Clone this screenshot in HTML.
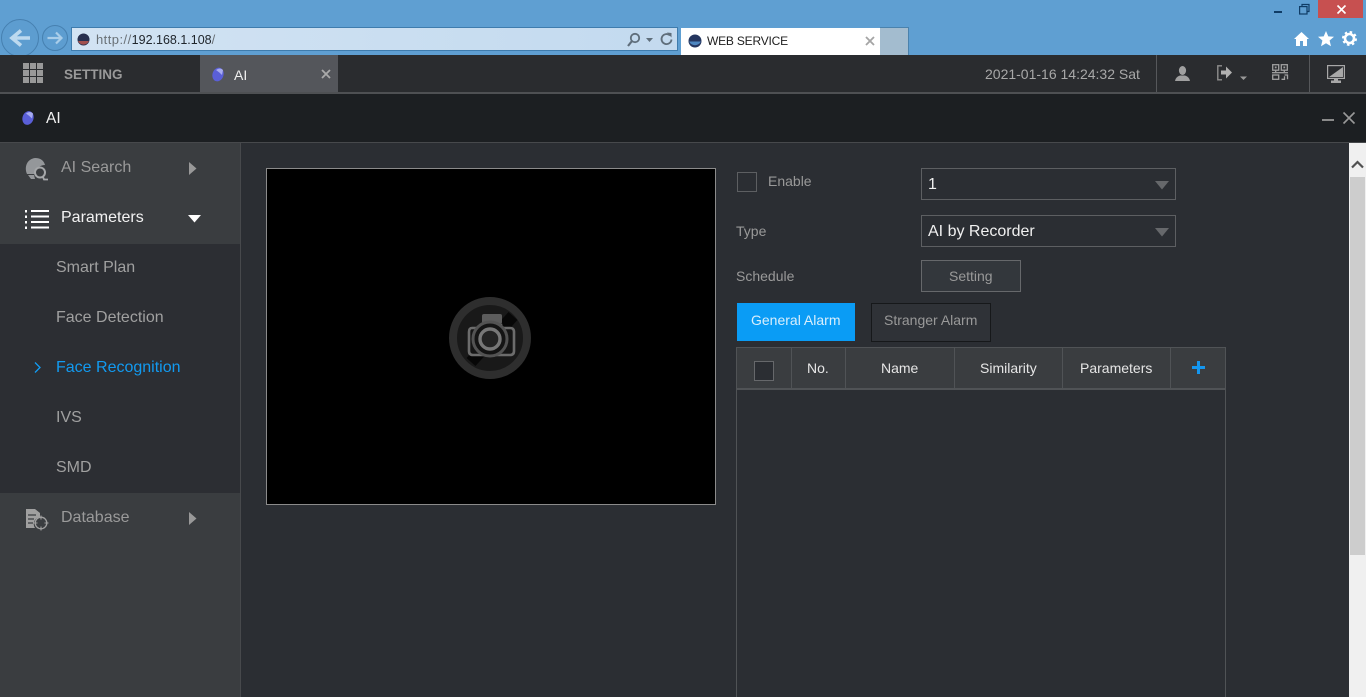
<!DOCTYPE html>
<html lang="en">
<head>
<meta charset="utf-8">
<title>WEB SERVICE</title>
<style>
html,body{margin:0;padding:0;width:1366px;height:697px;overflow:hidden;background:#2b2e33;font-family:"Liberation Sans",sans-serif}
.a{position:absolute}
.t{position:absolute;white-space:nowrap;line-height:20px}
svg{position:absolute;overflow:visible}
</style>
</head>
<body>
<!-- browser chrome -->
<div class="a" style="left:0;top:0;width:1366px;height:55px;background:#5f9fd2"></div>
<svg style="left:0;top:18px" width="70" height="37" viewBox="0 0 70 37">
<circle cx="20" cy="20" r="18.500" fill="#5d9dd0" stroke="#4680b0" stroke-width="1"/>
<circle cx="55" cy="20" r="12.500" fill="#5d9dd0" stroke="#4680b0" stroke-width="1"/>
<path d="M30 20H14M21 12.500l-9 7.500 9 7.500" fill="none" stroke="#bcd9ef" stroke-width="3.600"/>
<path d="M47.500 20H61M56 14.500l5.500 5.500-5.500 5.500" fill="none" stroke="#a9cde9" stroke-width="2.200"/>
</svg>
<div class="a" style="left:71px;top:27px;width:607px;height:24px;box-sizing:border-box;border:1px solid #3f7cad;background:linear-gradient(90deg,#d2e3f3,#c3daef)"></div>
<svg style="left:77px;top:33px" width="13" height="13"><circle cx="6.500" cy="6.500" r="6" fill="#28304f"/><path d="M1 8a6 6 0 0 0 11 0z" fill="#a2504f"/></svg>
<div class="t" style="left:96px;top:30px;font-size:13px;color:#6a7177;letter-spacing:.45px">http://<span style="color:#20262c;font-size:12.500px;letter-spacing:0">192.168.1.108</span>/</div>
<svg style="left:626px;top:32px" width="50" height="16">
<circle cx="9" cy="6" r="4.200" fill="none" stroke="#5f6e7b" stroke-width="1.800"/>
<path d="M6 9l-4 5" stroke="#5f6e7b" stroke-width="2.200"/>
<path d="M20 6h7l-3.500 4z" fill="#5f6e7b"/>
<path d="M44 3.500a5 5 0 1 0 1.500 4" fill="none" stroke="#5f6e7b" stroke-width="1.800"/><path d="M41 .5l4.500.5v4.500z" fill="#5f6e7b"/>
</svg>
<div class="a" style="left:681px;top:28px;width:199px;height:27px;background:#fff"></div>
<div class="a" style="left:880px;top:27px;width:29px;height:28px;box-sizing:border-box;border:1px solid #4a82ad;border-left:0;border-bottom:0;background:#a3bccf"></div>
<svg style="left:688px;top:34px" width="14" height="14"><circle cx="7" cy="7" r="6.500" fill="#25365f"/><path d="M1.200 7.500a6 5 0 0 0 11.600 0z" fill="#4d86c0"/></svg>
<div class="t" style="left:707px;top:31px;font-size:12px;letter-spacing:-.2px;color:#1d1d1d">WEB SERVICE</div>
<svg style="left:865px;top:36px" width="10" height="10"><path d="M1 1l8 8M9 1l-8 8" stroke="#a5a5a5" stroke-width="1.800"/></svg>
<!-- window buttons -->
<div class="a" style="left:1274px;top:11px;width:8px;height:2px;background:#0f3c66"></div>
<svg style="left:1299px;top:4px" width="11" height="11"><path d="M3 2.500V.5h7v7H8" fill="none" stroke="#0f3c66" stroke-width="1.200"/><rect x=".6" y="2.600" width="7.400" height="7.400" fill="none" stroke="#0f3c66" stroke-width="1.200"/></svg>
<div class="a" style="left:1318px;top:0;width:45px;height:18px;background:#c75050"></div>
<svg style="left:1337px;top:5px" width="9" height="9"><path d="M.5.500l8 8M8.500.500l-8 8" stroke="#fff" stroke-width="1.600"/></svg>
<svg style="left:1294px;top:31px" width="64" height="16">
<path d="M7.500 1L0 8h2v7h4v-5h3v5h4V8h2z" fill="#fff"/>
<path d="M32 0l2.300 5.400 5.700.4-4.400 3.700 1.400 5.700-5-3-5 3 1.400-5.700L24 5.800l5.700-.4z" fill="#fff"/>
<circle cx="55.500" cy="7.500" r="4.500" fill="none" stroke="#fff" stroke-width="2.600"/>
<circle cx="55.500" cy="7.500" r="6.500" fill="none" stroke="#fff" stroke-width="2" stroke-dasharray="2.500 2.600"/>
</svg>
<!-- app top bar -->
<div class="a" style="left:0;top:55px;width:1366px;height:37px;background:#2a2c2f;border-bottom:2px solid #4e5053"></div>
<svg style="left:23px;top:63px" width="20" height="20" fill="#999">
<rect x="0" y="0" width="6" height="6"/><rect x="7" y="0" width="6" height="6"/><rect x="14" y="0" width="6" height="6"/>
<rect x="0" y="7" width="6" height="6"/><rect x="7" y="7" width="6" height="6"/><rect x="14" y="7" width="6" height="6"/>
<rect x="0" y="14" width="6" height="6"/><rect x="7" y="14" width="6" height="6"/><rect x="14" y="14" width="6" height="6"/>
</svg>
<div class="t" style="left:64px;top:65px;font-size:13.500px;font-weight:bold;color:#999">SETTING</div>
<div class="a" style="left:200px;top:55px;width:138px;height:37px;background:#54565b"></div>
<svg style="left:211px;top:67px" width="14" height="16"><ellipse cx="7" cy="7.500" rx="5.500" ry="7" transform="rotate(18 7 7.500)" fill="#5a5fd8"/><path d="M5 3q4-3 7 0l-1 5q-3-3-6-5z" fill="#a7abf0"/></svg>
<div class="t" style="left:234px;top:65px;font-size:14px;color:#f0f0f0">AI</div>
<svg style="left:321px;top:69px" width="10" height="10"><path d="M1 1l8 8M9 1l-8 8" stroke="#aaa" stroke-width="1.800"/></svg>
<div class="t" style="left:985px;top:64px;font-size:14px;color:#a8a8a8">2021-01-16 14:24:32 Sat</div>
<div class="a" style="left:1156px;top:55px;width:1px;height:37px;background:#56585b"></div>
<div class="a" style="left:1309px;top:55px;width:1px;height:37px;background:#56585b"></div>
<svg style="left:1175px;top:66px" width="15" height="15" fill="#a0a0a0"><ellipse cx="7.500" cy="4.500" rx="3.600" ry="4.500"/><path d="M0 15q.5-4 5-5.500h5q4.500 1.500 5 5.500z"/></svg>
<svg style="left:1217px;top:65px" width="30" height="16">
<path d="M5 .8H.8v14H5" fill="none" stroke="#8e8e8e" stroke-width="1.400"/>
<path d="M4 5.500h5V1.500l6 6-6 6v-4H4z" fill="#b0b0b0"/>
<path d="M23 11.500h7l-3.500 3.500z" fill="#999"/>
</svg>
<svg style="left:1272px;top:64px" width="16" height="16" fill="none" stroke="#a0a0a0" stroke-width="1.300">
<rect x=".7" y=".7" width="6" height="5.500"/><rect x="9.300" y=".7" width="6" height="5.500"/>
<rect x="2.800" y="2.500" width="1.800" height="1.800" fill="#a0a0a0" stroke="none"/><rect x="11.400" y="2.500" width="1.800" height="1.800" fill="#a0a0a0" stroke="none"/>
<path d="M3.700 6.500v1.500M12.300 6.500v1.500"/>
<path d="M0 8.700h16"/>
<rect x=".7" y="11" width="6" height="4.300"/><path d="M9.500 15.300h3v-3M12.500 11h3v4.300"/>
</svg>
<svg style="left:1327px;top:65px" width="18" height="18">
<rect x=".6" y=".6" width="16.800" height="12.800" fill="none" stroke="#a8a8a8" stroke-width="1.200"/>
<path d="M2 12L16 2v10z" fill="#a8a8a8"/><path d="M7 14h4v1.500h3V18H4v-2.500h3z" fill="#a8a8a8"/>
</svg>
<!-- title bar -->
<div class="a" style="left:0;top:94px;width:1366px;height:48px;background:#1c1f22;border-bottom:1px solid #47494c"></div>
<svg style="left:21px;top:110px" width="14" height="16"><ellipse cx="7" cy="8" rx="5.500" ry="7" transform="rotate(18 7 8)" fill="#5a5fd8"/><path d="M5 3.500q4-3 7 0l-1 5q-3-3-6-5z" fill="#a7abf0"/></svg>
<div class="t" style="left:46px;top:108.500px;font-size:15.500px;color:#f2f2f2">AI</div>
<div class="a" style="left:1322px;top:119px;width:12px;height:2px;background:#8a8a8a"></div>
<svg style="left:1343px;top:112px" width="12" height="12"><path d="M.5.500l11 11M11.500.500l-11 11" stroke="#999" stroke-width="1.600"/></svg>
<!-- sidebar -->
<div class="a" style="left:0;top:143px;width:240px;height:554px;background:#3a3d40;border-right:1px solid #47494c"></div>
<div class="a" style="left:0;top:244px;width:240px;height:249px;background:#2c2e33"></div>
<svg style="left:25px;top:157px" width="24" height="24">
<path d="M2 17C-1 10 2 2 10 1c6 0 9 3 10 7-5 0-9 3-10 9z" fill="#94979a"/>
<circle cx="15" cy="15.500" r="5" fill="#3a3d40" stroke="#a5a7a9" stroke-width="2"/><path d="M18 20l1 2.500h4" fill="none" stroke="#a5a7a9" stroke-width="1.800"/>
<path d="M3 18h6l1 4H6z" fill="#94979a"/>
</svg>
<div class="t" style="left:61px;top:158px;font-size:16px;color:#9a9a9a">AI Search</div>
<svg style="left:189px;top:162px" width="8" height="13"><path d="M0 0l7.500 6.500L0 13z" fill="#999"/></svg>
<svg style="left:25px;top:210px" width="25" height="19" fill="#fff">
<rect x="0" y="0" width="2" height="2.500"/><rect x="0" y="5.500" width="2" height="2.500"/><rect x="0" y="11" width="2" height="2.500"/><rect x="0" y="16.500" width="2" height="2.500"/>
<rect x="6" y="0" width="18" height="2"/><rect x="6" y="5.500" width="18" height="2"/><rect x="6" y="11" width="18" height="2"/><rect x="6" y="16.500" width="18" height="2"/>
</svg>
<div class="t" style="left:61px;top:208px;font-size:16px;color:#f2f2f2">Parameters</div>
<svg style="left:188px;top:215px" width="13" height="8"><path d="M0 0h13L6.500 7.500z" fill="#fff"/></svg>
<div class="t" style="left:56px;top:258px;font-size:16px;color:#a0a0a0">Smart Plan</div>
<div class="t" style="left:56px;top:308px;font-size:16px;color:#a0a0a0">Face Detection</div>
<svg style="left:34px;top:362px" width="7" height="11"><path d="M1 .500l5 5-5 5" fill="none" stroke="#129df5" stroke-width="1.300"/></svg>
<div class="t" style="left:56px;top:358px;font-size:16px;color:#129af0">Face Recognition</div>
<div class="t" style="left:56px;top:408px;font-size:16px;color:#a0a0a0">IVS</div>
<div class="t" style="left:56px;top:458px;font-size:16px;color:#a0a0a0">SMD</div>
<svg style="left:26px;top:509px" width="22" height="21">
<path d="M0 0h9l5 4v4a7 7 0 0 0-5 11H0z" fill="#a0a0a0"/>
<path d="M2 6h8M2 10h6M2 14h5" stroke="#3a3d40" stroke-width="1.300"/>
<circle cx="15" cy="14" r="5.800" fill="none" stroke="#a0a0a0" stroke-width="1.300"/>
<path d="M15 6.500v4M15 17.500v4M7.500 14h4M18.500 14h4" stroke="#a0a0a0" stroke-width="1.100"/>
</svg>
<div class="t" style="left:61px;top:508px;font-size:16px;color:#9a9a9a">Database</div>
<svg style="left:189px;top:512px" width="8" height="13"><path d="M0 0l7.500 6.500L0 13z" fill="#999"/></svg>
<!-- video -->
<div class="a" style="left:266px;top:168px;width:450px;height:337px;box-sizing:border-box;background:#000;border:1px solid #8b8b8b"></div>
<svg style="left:445px;top:292px" width="92" height="92" viewBox="0 0 92 92">
<circle cx="45" cy="46" r="37" fill="#191919" stroke="#2e2e2e" stroke-width="8"/>
<path d="M68 24L26 70" stroke="#070707" stroke-width="12"/>
<path d="M27 36h9v-3h20v3h9q4 0 4 4v19q0 4-4 4H28q-4 0-4-4V40q0-4 3-4z" fill="#161616" stroke="#6c6c6c" stroke-width="2.600"/>
<rect x="37" y="22" width="20" height="10" rx="2" fill="#5c5c5c"/>
<circle cx="45" cy="47" r="17" fill="#141414" stroke="#535353" stroke-width="3"/>
<circle cx="45" cy="47" r="10" fill="#232323" stroke="#777" stroke-width="3.400"/>
</svg>
<!-- form -->
<div class="a" style="left:737px;top:172px;width:20px;height:20px;box-sizing:border-box;border:1px solid #5d5f62"></div>
<div class="t" style="left:768px;top:171px;font-size:14px;color:#999">Enable</div>
<div class="a" style="left:921px;top:168px;width:255px;height:32px;box-sizing:border-box;border:1px solid #5d5f62"></div>
<div class="t" style="left:928px;top:175px;font-size:16px;color:#f0f0f0">1</div>
<svg style="left:1155px;top:181px" width="14" height="9"><path d="M0 0h14L7 8.500z" fill="#66686b"/></svg>
<div class="t" style="left:736px;top:221px;font-size:14px;color:#999">Type</div>
<div class="a" style="left:921px;top:215px;width:255px;height:32px;box-sizing:border-box;border:1px solid #5d5f62"></div>
<div class="t" style="left:928px;top:222px;font-size:16px;color:#f0f0f0">AI by Recorder</div>
<svg style="left:1155px;top:228px" width="14" height="9"><path d="M0 0h14L7 8.500z" fill="#66686b"/></svg>
<div class="t" style="left:736px;top:266px;font-size:14px;color:#999">Schedule</div>
<div class="a" style="left:921px;top:260px;width:100px;height:32px;box-sizing:border-box;border:1px solid #66686b;background:#33373c"></div>
<div class="t" style="left:949px;top:266px;font-size:14px;color:#999">Setting</div>
<div class="a" style="left:737px;top:303px;width:118px;height:38px;background:#0a9cf5"></div>
<div class="t" style="left:751px;top:310px;font-size:14px;color:#d8eefc">General Alarm</div>
<div class="a" style="left:871px;top:303px;width:120px;height:39px;box-sizing:border-box;border:1px solid #16181a;background:#2f3237"></div>
<div class="t" style="left:884px;top:310px;font-size:14px;color:#999">Stranger Alarm</div>
<!-- table -->
<div class="a" style="left:736px;top:347px;width:490px;height:350px;box-sizing:border-box;border:1px solid #505356;border-bottom:0"></div>
<div class="a" style="left:737px;top:348px;width:488px;height:42px;box-sizing:border-box;background:#3a3d40;border-bottom:2px solid #505356"></div>
<div class="a" style="left:791px;top:348px;width:1px;height:40px;background:#505356"></div>
<div class="a" style="left:845px;top:348px;width:1px;height:40px;background:#505356"></div>
<div class="a" style="left:954px;top:348px;width:1px;height:40px;background:#505356"></div>
<div class="a" style="left:1062px;top:348px;width:1px;height:40px;background:#505356"></div>
<div class="a" style="left:1170px;top:348px;width:1px;height:40px;background:#505356"></div>
<div class="a" style="left:754px;top:361px;width:20px;height:20px;box-sizing:border-box;border:1px solid #66686b;background:#2b2e33"></div>
<div class="t" style="left:807px;top:358px;font-size:14px;color:#e6e6e6">No.</div>
<div class="t" style="left:881px;top:358px;font-size:14px;color:#e6e6e6">Name</div>
<div class="t" style="left:980px;top:358px;font-size:14px;color:#e6e6e6">Similarity</div>
<div class="t" style="left:1080px;top:358px;font-size:14px;color:#e6e6e6">Parameters</div>
<svg style="left:1192px;top:361px" width="13" height="13"><path d="M6.500 0v13M0 6.500h13" stroke="#1496ee" stroke-width="3"/></svg>
<!-- scrollbar -->
<div class="a" style="left:1349px;top:143px;width:17px;height:554px;background:#f0f0f0"></div>
<div class="a" style="left:1350px;top:177px;width:15px;height:378px;background:#cdcdcd"></div>
<svg style="left:1351px;top:160px" width="13" height="9"><path d="M1 7.500l5.500-5.500 5.500 5.500" fill="none" stroke="#505050" stroke-width="2.200"/></svg>
</body>
</html>
